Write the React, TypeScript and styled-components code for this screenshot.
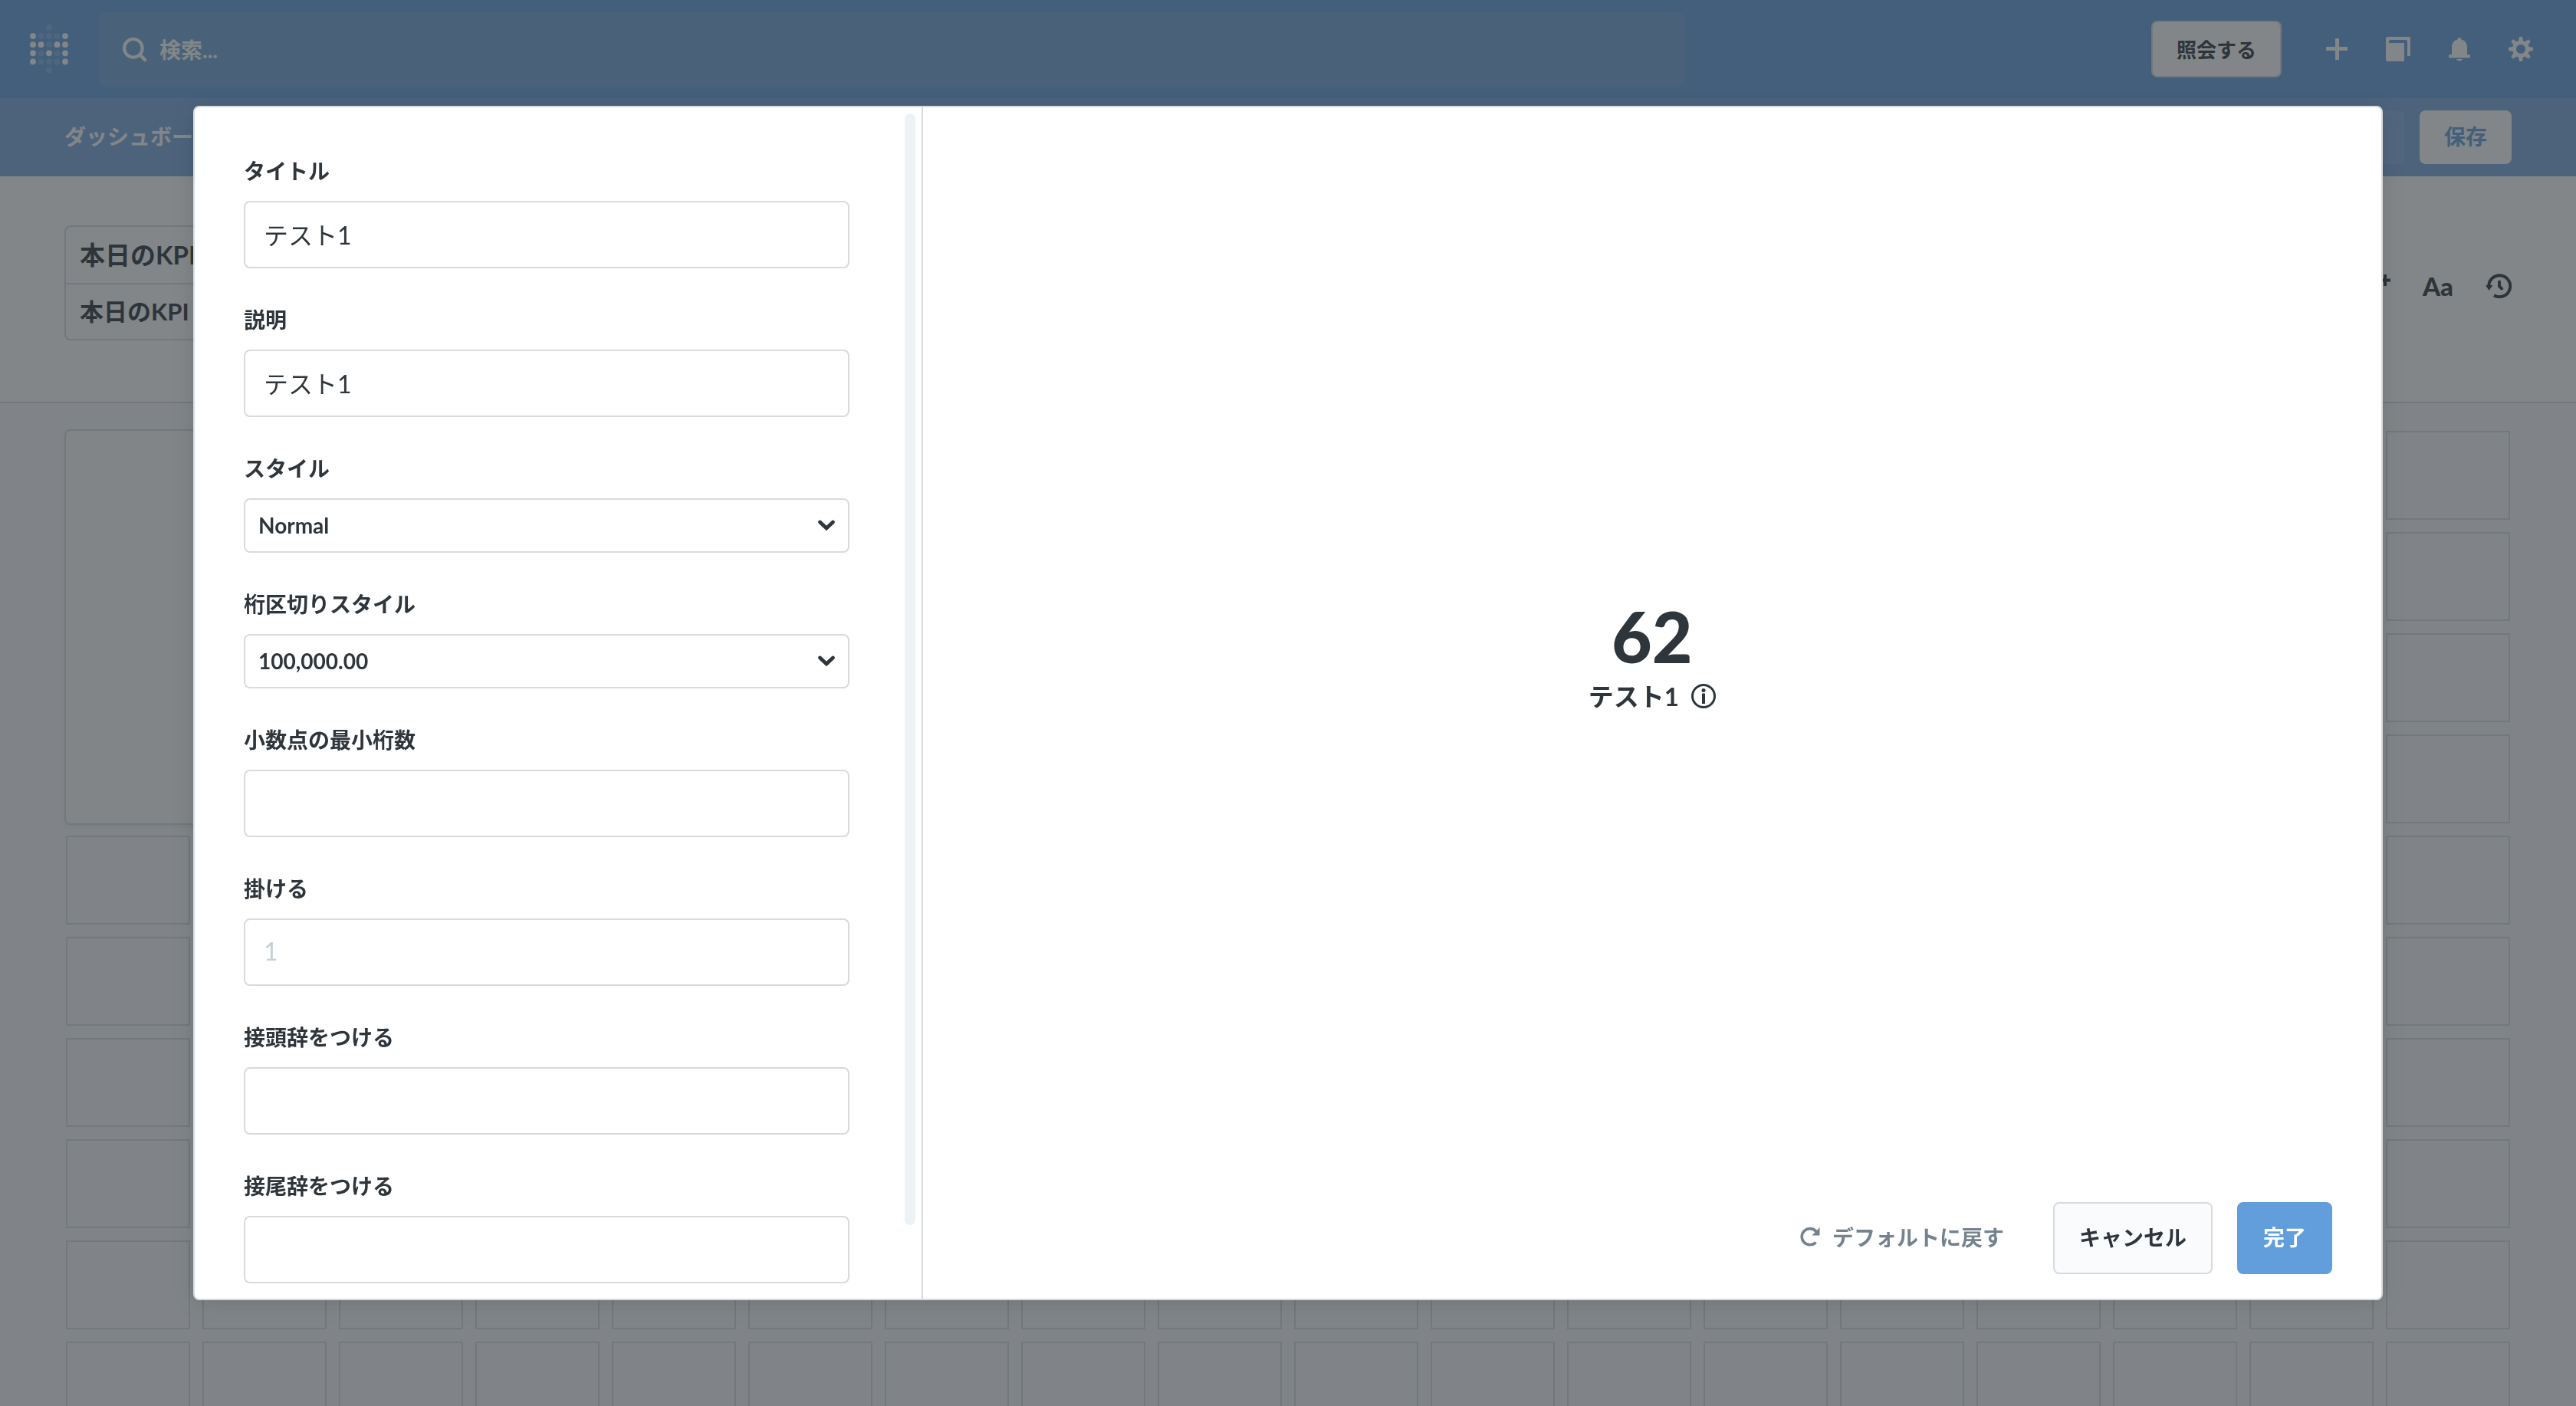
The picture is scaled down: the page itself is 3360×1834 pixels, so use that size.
import React from "react";
import styled, { createGlobalStyle, css } from "styled-components";

const color = {
  brand: "#629edc",
  brandSoft: "#7ba7df",
  search: "#73a5d8",
  text: "#2e353b",
  muted: "#74838f",
  light: "#c7cfd4",
  border: "#d7dbde",
  canvas: "#f9fbfc",
  track: "#edf2f5",
};

const GlobalStyle = createGlobalStyle`
  *, *::before, *::after { box-sizing: border-box; }
  body {
    margin: 0;
    overflow: hidden;
    background: ${color.canvas};
    color: ${color.text};
    font-family: Lato, "Noto Sans CJK JP", sans-serif;
    font-size: 28px;
  }
  button, input, select { font: inherit; color: inherit; margin: 0; }
  button { cursor: pointer; }
  svg { display: block; flex: none; }
`;

const Page = styled.div`
  display: flex;
  flex-direction: column;
  height: 100vh;
  overflow: hidden;
`;

/* ---------- top navigation ---------- */

const NavBar = styled.header`
  display: flex;
  align-items: center;
  flex: none;
  height: 128px;
  padding: 0 32px 0 38px;
  background: ${color.brand};
  color: #fff;
`;

const HomeLink = styled.a`
  display: block;
  margin-right: 38px;
`;

const SearchBox = styled.label`
  display: flex;
  align-items: center;
  gap: 16px;
  flex: 0 1 2070px;
  height: 98px;
  margin-top: 2px;
  padding: 0 32px;
  border-radius: 12px;
  background: ${color.search};
`;

const SearchInput = styled.input`
  flex: 1;
  min-width: 0;
  padding: 0;
  border: 0;
  outline: 0;
  background: transparent;
  font-weight: 700;
  &::placeholder { color: #fff; opacity: 1; }
`;

const NavActions = styled.nav`
  display: flex;
  align-items: center;
  margin-left: auto;
`;

const IconButton = styled.button`
  display: flex;
  align-items: center;
  justify-content: center;
  width: 80px;
  height: 80px;
  padding: 0;
  border: 0;
  background: none;
`;

const buttonBase = css`
  display: flex;
  align-items: center;
  justify-content: center;
  border: 2px solid transparent;
  border-radius: 8px;
  font-weight: 700;
  white-space: nowrap;
`;

const AskButton = styled.button`
  ${buttonBase}
  height: 74px;
  margin-right: 32px;
  padding: 0 31px 2px;
  border-color: ${color.border};
  background: #fff;
  color: ${color.text};
  font-size: 26px;
`;

/* ---------- edit bar ---------- */

const EditBar = styled.div`
  display: flex;
  align-items: center;
  gap: 20px;
  flex: none;
  height: 102px;
  padding: 0 84px;
  background: ${color.brandSoft};
  color: #fff;
  font-weight: 700;
`;

const EditMessage = styled.span`
  margin-right: auto;
  padding-bottom: 4px;
`;

const EditButton = styled.button<{ $primary?: boolean }>`
  ${buttonBase}
  height: 70px;
  padding: 0 30px 4px;
  background: ${(p) => (p.$primary ? "#fff" : "rgba(255, 255, 255, 0.1)")};
  color: ${(p) => (p.$primary ? color.brand : "#fff")};
`;

/* ---------- dashboard header ---------- */

const DashHeader = styled.section`
  display: flex;
  align-items: flex-start;
  justify-content: space-between;
  flex: none;
  padding: 64px 84px 72px;
  border-bottom: 2px solid ${color.border};
  background: #fff;
`;

const TitleGroup = styled.div`
  flex: 0 1 1200px;
  border: 2px solid ${color.border};
  border-radius: 8px;
`;

const TitleInput = styled.input<{ $size: number }>`
  display: block;
  width: 100%;
  height: 73px;
  padding: 0 18px 4px;
  border: 0;
  outline: 0;
  background: transparent;
  font-size: ${(p) => p.$size}px;
  font-weight: 700;
  & + & { border-top: 2px solid ${color.border}; }
`;

const DashTools = styled.div`
  display: flex;
  align-items: center;
  gap: 42px;
  height: 158px;
`;

const ToolButton = styled.button`
  display: flex;
  padding: 0;
  border: 0;
  background: none;
  font-size: 33px;
  font-weight: 900;
  line-height: 40px;
`;

/* ---------- dashboard grid ---------- */

const Grid = styled.main`
  display: grid;
  grid-template-columns: repeat(18, 1fr);
  grid-auto-rows: 116px;
  gap: 16px;
  flex: none;
  padding: 36px 86px;
`;

const Cell = styled.div`
  border: 2px solid ${color.border};
`;

const Card = styled.div`
  grid-area: 1 / 1 / span 4 / span 4;
  border-radius: 6px;
  background: #fcfdfd;
  box-shadow: 0 0 0 2px ${color.border}, 0 2px 8px 2px rgba(0, 0, 0, 0.08);
`;

/* ---------- modal ---------- */

const Backdrop = styled.div`
  position: fixed;
  inset: 0;
  display: flex;
  align-items: center;
  justify-content: center;
  background: rgba(46, 53, 59, 0.6);
`;

const Modal = styled.div`
  display: flex;
  width: 85%;
  height: 85%;
  overflow: hidden;
  border: 2px solid ${color.border};
  border-radius: 8px;
  background: #fff;
  box-shadow: 0 4px 28px rgba(0, 0, 0, 0.13);
`;

const Sidebar = styled.div`
  display: flex;
  flex: 0 0 33.3%;
  min-width: 0;
  border-right: 2px solid ${color.border};
`;

const Fields = styled.form`
  display: flex;
  flex-direction: column;
  gap: 50px;
  flex: 1;
  min-width: 0;
  overflow: hidden;
  padding: 66px 64px 0;
`;

const ScrollTrack = styled.div`
  display: flex;
  flex: none;
  width: 30px;
  padding: 8px;
`;

const ScrollThumb = styled.div`
  width: 14px;
  height: calc(100% - 88px);
  border-radius: 7px;
  background: ${color.track};
`;

const FieldRow = styled.div`
  display: flex;
  flex-direction: column;
  gap: 22px;
`;

const FieldLabel = styled.label`
  font-weight: 700;
  line-height: 34px;
`;

const controlBase = css`
  width: 100%;
  border: 2px solid ${color.border};
  border-radius: 8px;
  outline: 0;
  background: #fff;
`;

const TextInput = styled.input`
  ${controlBase}
  height: 88px;
  padding: 0 24px 2px;
  font-size: 32px;
  &::placeholder { color: ${color.light}; opacity: 1; }
`;

const SelectWrap = styled.div`
  position: relative;
`;

const Select = styled.select`
  ${controlBase}
  display: block;
  appearance: none;
  height: 71px;
  padding: 0 56px 0 17px;
  font-weight: 700;
`;

const SelectArrow = styled.svg`
  position: absolute;
  top: 50%;
  right: 18px;
  transform: translateY(-50%);
  pointer-events: none;
`;

const Preview = styled.div`
  display: flex;
  flex-direction: column;
  flex: 1;
  min-width: 0;
`;

const Scalar = styled.div`
  display: flex;
  flex-direction: column;
  align-items: center;
  justify-content: center;
  gap: 12px;
  flex: 1;
  padding-top: 4px;
`;

const ScalarValue = styled.div`
  font-size: 91px;
  font-weight: 900;
  line-height: 92px;
`;

const ScalarTitle = styled.div`
  display: flex;
  align-items: center;
  gap: 16px;
  font-size: 33px;
  font-weight: 700;
  line-height: 40px;
`;

const Footer = styled.footer`
  display: flex;
  justify-content: flex-end;
  gap: 32px;
  padding: 0 64px 32px;
`;

const FooterButton = styled.button<{ $kind: "link" | "plain" | "primary" }>`
  ${buttonBase}
  gap: 16px;
  height: 94px;
  padding: ${(p) => (p.$kind === "link" ? "0 30px 4px" : "0 32px 4px")};
  border-color: ${(p) =>
    ({ link: "transparent", plain: color.border, primary: color.brand })[p.$kind]};
  background: ${(p) =>
    ({ link: "transparent", plain: "#fafbfc", primary: color.brand })[p.$kind]};
  color: ${(p) => ({ link: color.muted, plain: color.text, primary: "#fff" })[p.$kind]};
`;

/* ---------- icons ---------- */

const LOGO_ROWS = ["..o..", "#ooo#", "##o##", "#o#o#", "#ooo#", "..o.."];

const Logo = () => (
  <svg width="52" height="68" viewBox="0 0 52 68" fill="#fff" aria-hidden="true">
    {LOGO_ROWS.flatMap((row, y) =>
      [...row].map((dot, x) =>
        dot === "." ? null : (
          <circle
            key={`${x}-${y}`}
            cx={5 + x * 10.5}
            cy={6 + y * 11.1}
            r={3.9}
            opacity={dot === "#" ? 1 : 0.2}
          />
        ),
      ),
    )}
  </svg>
);

const SearchIcon = () => (
  <svg width="32" height="32" viewBox="0 0 33 33" fill="none" stroke="currentColor" aria-hidden="true">
    <circle cx="14.3" cy="14.3" r="12.2" strokeWidth="4.2" />
    <path d="M24 24l6 6" strokeWidth="4.6" strokeLinecap="round" />
  </svg>
);

const PlusIcon = () => (
  <svg width="28" height="28" viewBox="0 0 28 28" stroke="currentColor" strokeWidth="5" aria-hidden="true">
    <path d="M14.5 0v28M0 13.5h28" />
  </svg>
);

const CollectionIcon = () => (
  <svg width="32" height="32" viewBox="0 0 32 32" fill="currentColor" aria-hidden="true">
    <path d="M2 0h28a2 2 0 0 1 2 2v23h-4V6a2 2 0 0 0-2-2H6a2 2 0 0 0-2 2v2h20v24H2a2 2 0 0 1-2-2V2a2 2 0 0 1 2-2z" />
  </svg>
);

const BellIcon = () => (
  <svg width="28" height="32" viewBox="0 0 28 32" fill="currentColor" aria-hidden="true">
    <path d="M14 1a2.300 2.300 0 0 1 2.300 2.600C21.500 4.800 24 8.500 24 13.500V22c0 1 .5 1.500 1.500 1.500H28V27.500H0V23.500h2.500C3.500 23.500 4 23 4 22v-8.500c0-5 2.500-8.700 7.700-9.900A2.300 2.300 0 0 1 14 1zM10 29h8c-.5 1.600-2 2.400-4 2.400S10.500 30.600 10 29z" />
  </svg>
);

const GearIcon = () => (
  <svg width="32" height="32" viewBox="0 0 32 32" aria-hidden="true">
    <circle cx="16" cy="16" r="8.500" fill="none" stroke="currentColor" strokeWidth="5" />
    {[0, 45, 90, 135, 180, 225, 270, 315].map((a) => (
      <path
        key={a}
        d="M14 0h4l1.400 7.500h-6.800z"
        fill="currentColor"
        transform={`rotate(${a} 16 16)`}
      />
    ))}
  </svg>
);

const AddCardIcon = () => (
  <svg width="34" height="32" viewBox="0 0 34 32" fill="none" stroke="currentColor" aria-hidden="true">
    <path d="M27 1v15M19.500 8.500H34" strokeWidth="4" />
    <path d="M2 12v18M11 18v12M20 20v10" strokeWidth="4" />
  </svg>
);

const HistoryIcon = () => (
  <svg width="34" height="32" viewBox="0 0 34 32" fill="none" stroke="currentColor" aria-hidden="true">
    <path d="M4.200 16A14 14 0 1 1 11 28.200" strokeWidth="4" />
    <path d="M0 15h9.500L4.500 22z" fill="currentColor" stroke="none" />
    <path d="M18 10.500v6l3.200 3" strokeWidth="4" strokeLinecap="round" />
  </svg>
);

const ChevronIcon = () => (
  <SelectArrow width="24" height="16" viewBox="0 0 24 16" fill="none" stroke="currentColor" aria-hidden="true">
    <path d="M3.500 4l8.500 8 8.500-8" strokeWidth="4.800" strokeLinecap="round" />
  </SelectArrow>
);

const InfoIcon = () => (
  <svg width="32" height="32" viewBox="0 0 32 32" fill="currentColor" aria-hidden="true">
    <circle cx="16" cy="16" r="14.500" fill="none" stroke="currentColor" strokeWidth="3" />
    <circle cx="16" cy="8.500" r="2.500" />
    <path d="M14 12.500h4V26h-4z" />
  </svg>
);

const RefreshIcon = () => (
  <svg width="26" height="26" viewBox="0 0 26 26" fill="none" stroke="currentColor" aria-hidden="true">
    <path d="M20.500 20.500A10.600 10.600 0 1 1 21 6.500" strokeWidth="3.600" />
    <path d="M25.500 1v10.500H15.500z" fill="currentColor" stroke="none" />
  </svg>
);

/* ---------- content ---------- */

type Field =
  | { id: string; label: string; kind: "text"; value?: string; placeholder?: string }
  | { id: string; label: string; kind: "select"; options: string[] };

const FIELDS: Field[] = [
  { id: "title", label: "タイトル", kind: "text", value: "テスト1" },
  { id: "description", label: "説明", kind: "text", value: "テスト1" },
  { id: "style", label: "スタイル", kind: "select", options: ["Normal", "Percent", "Scientific", "Currency"] },
  { id: "separator", label: "桁区切りスタイル", kind: "select", options: ["100,000.00", "100 000,00", "100.000,00", "100000.00"] },
  { id: "decimals", label: "小数点の最小桁数", kind: "text" },
  { id: "scale", label: "掛ける", kind: "text", placeholder: "1" },
  { id: "prefix", label: "接頭辞をつける", kind: "text" },
  { id: "suffix", label: "接尾辞をつける", kind: "text" },
];

const EMPTY_CELLS = Array.from({ length: 164 }, (_, i) => i);

const SettingField = ({ field }: { field: Field }) => (
  <FieldRow>
    <FieldLabel htmlFor={field.id}>{field.label}</FieldLabel>
    {field.kind === "select" ? (
      <SelectWrap>
        <Select id={field.id}>
          {field.options.map((o) => (
            <option key={o}>{o}</option>
          ))}
        </Select>
        <ChevronIcon />
      </SelectWrap>
    ) : (
      <TextInput id={field.id} defaultValue={field.value} placeholder={field.placeholder} />
    )}
  </FieldRow>
);

export default function App() {
  return (
    <>
      <GlobalStyle />
      <Page>
        <NavBar>
          <HomeLink href="#" aria-label="ホーム">
            <Logo />
          </HomeLink>
          <SearchBox>
            <SearchIcon />
            <SearchInput aria-label="検索" placeholder="検索..." />
          </SearchBox>
          <NavActions>
            <AskButton>照会する</AskButton>
            <IconButton aria-label="新規"><PlusIcon /></IconButton>
            <IconButton aria-label="コレクション"><CollectionIcon /></IconButton>
            <IconButton aria-label="通知"><BellIcon /></IconButton>
            <IconButton aria-label="設定"><GearIcon /></IconButton>
          </NavActions>
        </NavBar>

        <EditBar>
          <EditMessage>ダッシュボードを編集しています</EditMessage>
          <EditButton>キャンセル</EditButton>
          <EditButton $primary>保存</EditButton>
        </EditBar>

        <DashHeader>
          <TitleGroup>
            <TitleInput $size={33} aria-label="ダッシュボード名" defaultValue="本日のKPI" />
            <TitleInput $size={31} aria-label="ダッシュボードの説明" defaultValue="本日のKPI" />
          </TitleGroup>
          <DashTools>
            <ToolButton aria-label="質問を追加"><AddCardIcon /></ToolButton>
            <ToolButton>Aa</ToolButton>
            <ToolButton aria-label="履歴"><HistoryIcon /></ToolButton>
          </DashTools>
        </DashHeader>

        <Grid>
          <Card />
          {EMPTY_CELLS.map((i) => (
            <Cell key={i} />
          ))}
        </Grid>
      </Page>

      <Backdrop>
        <Modal role="dialog" aria-modal="true">
          <Sidebar>
            <Fields>
              {FIELDS.map((f) => (
                <SettingField key={f.id} field={f} />
              ))}
            </Fields>
            <ScrollTrack>
              <ScrollThumb />
            </ScrollTrack>
          </Sidebar>
          <Preview>
            <Scalar>
              <ScalarValue>62</ScalarValue>
              <ScalarTitle>
                テスト1
                <InfoIcon />
              </ScalarTitle>
            </Scalar>
            <Footer>
              <FooterButton $kind="link">
                <RefreshIcon />
                デフォルトに戻す
              </FooterButton>
              <FooterButton $kind="plain">キャンセル</FooterButton>
              <FooterButton $kind="primary">完了</FooterButton>
            </Footer>
          </Preview>
        </Modal>
      </Backdrop>
    </>
  );
}
